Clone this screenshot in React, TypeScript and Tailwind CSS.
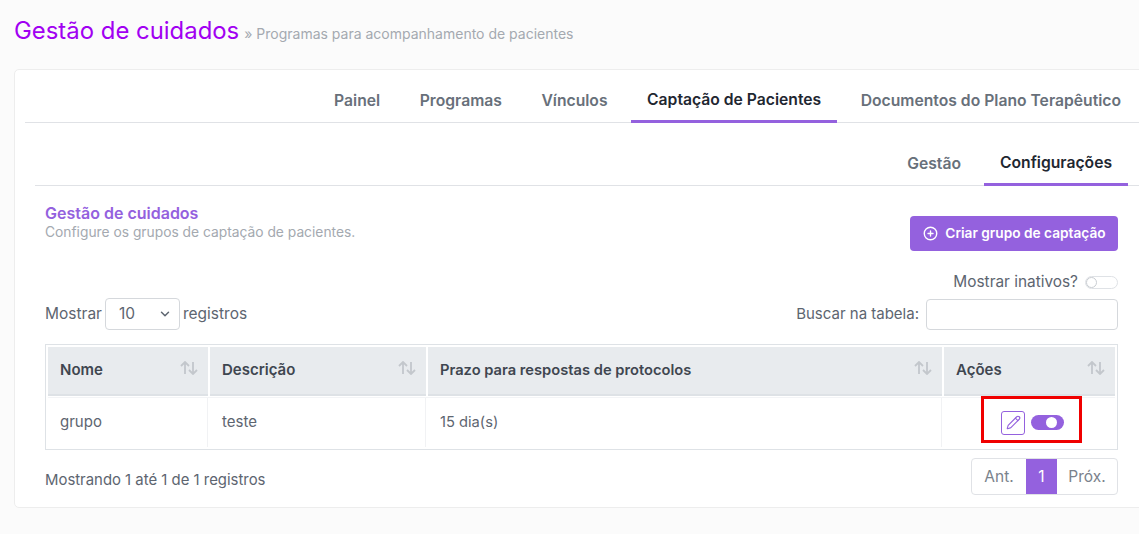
import React from 'react';
import { ChevronDown, CirclePlus, Pencil } from 'lucide-react';

const font = "font-['Inter','Liberation_Sans',sans-serif]";

const columns = [
    { label: 'Nome', width: 'w-[160px]', value: 'grupo' },
    { label: 'Descrição', width: 'w-[216px]', value: 'teste' },
    { label: 'Prazo para respostas de protocolos', width: 'w-[514px] text-[14.7px]', value: '15 dia(s)' },
    { label: 'Ações', width: 'w-[171px]', value: '' },
];

const SortIcon = () => (
    <svg width="18" height="14" viewBox="0 0 18 14" fill="none" stroke="#c3c7cc" strokeWidth="1.8" className="mt-[-6px]">
        <path d="M5 13V1M1 5l4-4 4 4" />
        <path d="M13 1v12M9 9l4 4 4-4" />
    </svg>
);

const Toggle = ({ on }: { on: boolean }) =>
    on ? (
        <span className="flex h-[15px] w-[33px] items-center justify-end rounded-full bg-[#9461de] pr-[7px]">
            <span className="h-[11px] w-[11px] rounded-full bg-white" />
        </span>
    ) : (
        <span className="flex h-[13px] w-[33px] items-center rounded-full border border-[#dfe2e6] bg-white">
            <span className="h-[11px] w-[11px] rounded-full border border-[#c9cdd2] bg-white" />
        </span>
    );

export default function App() {
    return (
        <div className={`${font} h-[534px] w-[1139px] overflow-hidden bg-[#fbfbfb] pl-[14px]`}>
            {/* Page title */}
            <div className="flex h-[69px] items-baseline gap-[5px] pt-[15px]">
                <h1 className="text-[23.9px] leading-[32px] text-[#a100f2]">Gestão de cuidados</h1>
                <span className="text-[14px] text-[#a4a9b0]">» Programas para acompanhamento de pacientes</span>
            </div>

            <div className="h-[439px] w-[1140px] rounded-tl-[5px] rounded-bl-[5px] border border-[#ededed] bg-white pt-[10px] pl-[10px]">
                {/* Main tabs */}
                <div className="flex h-[43px] justify-end gap-[7.5px] border-b border-[#e0e2e6] pr-[16px] text-[15.7px] font-semibold text-[#68707a]">
                    <span className="px-[16px] pt-[9px]">Painel</span>
                    <span className="px-[16px] pt-[9px]">Programas</span>
                    <span className="px-[16px] pt-[9px]">Vínculos</span>
                    <span className="h-[43px] border-b-[3px] border-[#9461de] px-[16px] pt-[8px] text-[#1f2731]">Captação de Pacientes</span>
                    <span className="px-[16px] pt-[9px]">Documentos do Plano Terapêutico</span>
                </div>

                {/* Sub tabs */}
                <div className="mt-[20px] ml-[10px] flex h-[43px] justify-end border-b border-[#e0e2e6] pr-[25px] text-[15.7px] font-semibold text-[#68707a]">
                    <span className="pt-[9px] pr-[23px]">Gestão</span>
                    <span className="h-[43px] w-[144px] border-b-[3px] border-[#9461de] pt-[8px] text-center text-[#1f2731]">Configurações</span>
                </div>

                <div className="box-content w-[1073px] pl-[20px]">
                    <div className="flex items-start justify-between pt-[17px]">
                        <div>
                            <h2 className="text-[16px] leading-[20px] font-semibold text-[#9461de]">Gestão de cuidados</h2>
                            <p className="mt-[1px] text-[13.8px] leading-[16px] text-[#a4a9b0]">Configure os grupos de captação de pacientes.</p>
                        </div>
                        <button className="mt-[13px] flex h-[35px] w-[208px] items-center justify-center gap-[7px] rounded-[4px] bg-[#9461de] pl-[1px] text-[13.7px] font-semibold text-white">
                            <CirclePlus size={15} strokeWidth={2.2} />
                            Criar grupo de captação
                        </button>
                    </div>

                    <div className="mt-[20px] flex h-[22px] items-center justify-end gap-[7px] text-[15.4px] text-[#5d6570]">
                        Mostrar inativos?
                        <Toggle on={false} />
                    </div>

                    {/* Table controls */}
                    <div className="mt-[5px] flex items-center justify-between text-[15.5px] text-[#5d6570]">
                        <div className="flex items-center gap-[3px]">
                            Mostrar
                            <div className="flex h-[32px] w-[75px] items-center justify-between rounded-[4px] border border-[#d5d8dc] bg-white pr-[7px] pl-[13px]">
                                10
                                <ChevronDown size={14} strokeWidth={2.5} />
                            </div>
                            registros
                        </div>
                        <div className="flex items-center gap-[7px]">
                            <span className="text-[15px]">Buscar na tabela:</span>
                            <input className="h-[31px] w-[192px] rounded-[4px] border border-[#d5d8dc] bg-white" />
                        </div>
                    </div>

                    {/* Table */}
                    <div className="mt-[14px] h-[106px] border border-[#dee2e6] p-[2px]">
                        <div className="flex gap-[2px] text-[15px] font-semibold text-[#3f4650]">
                            {columns.map((col) => (
                                <div key={col.label} className={`${col.width} flex h-[49px] items-center justify-between border-b-[2px] border-[#dee2e6] bg-[#e8ebee] pr-[10px] pl-[12px]`}>
                                    {col.label}
                                    <SortIcon />
                                </div>
                            ))}
                        </div>
                        <div className="mt-[1px] flex h-[50px] gap-[2px] border-t border-[#f3f4f6] text-[15px] text-[#5d6570]">
                            {columns.map((col, index) => (
                                <div key={col.label} className={`${col.width} flex items-center ${index < 3 ? 'border-r border-[#f1f2f4] pl-[12px]' : 'justify-center gap-[6px] pl-[6px]'}`}>
                                    {col.value}
                                    {index === 3 && (
                                        <>
                                            <span className="flex h-[24px] w-[24px] items-center justify-center rounded-[3px] border border-[#9461de] text-[#9461de]">
                                                <Pencil size={15} strokeWidth={1.8} />
                                            </span>
                                            <Toggle on />
                                        </>
                                    )}
                                </div>
                            ))}
                        </div>
                    </div>

                    {/* Footer */}
                    <div className="mt-[8px] flex items-start justify-between text-[14.9px] text-[#5d6570]">
                        <span className="pt-[11px]">Mostrando 1 até 1 de 1 registros</span>
                        <div className="flex h-[37px] overflow-hidden rounded-[4px] border border-[#e0e2e6] bg-white text-[15.5px] text-[#7a828c]">
                            <span className="flex w-[54px] items-center justify-center">Ant.</span>
                            <span className="flex w-[31px] items-center justify-center bg-[#9461de] text-white">1</span>
                            <span className="flex w-[60px] items-center justify-center">Próx.</span>
                        </div>
                    </div>
                </div>
            </div>

            {/* Highlight drawn over the actions cell */}
            <div className="absolute top-[396px] left-[981px] h-[47px] w-[101px] border-[3px] border-[#f00000]" />
        </div>
    );
}
